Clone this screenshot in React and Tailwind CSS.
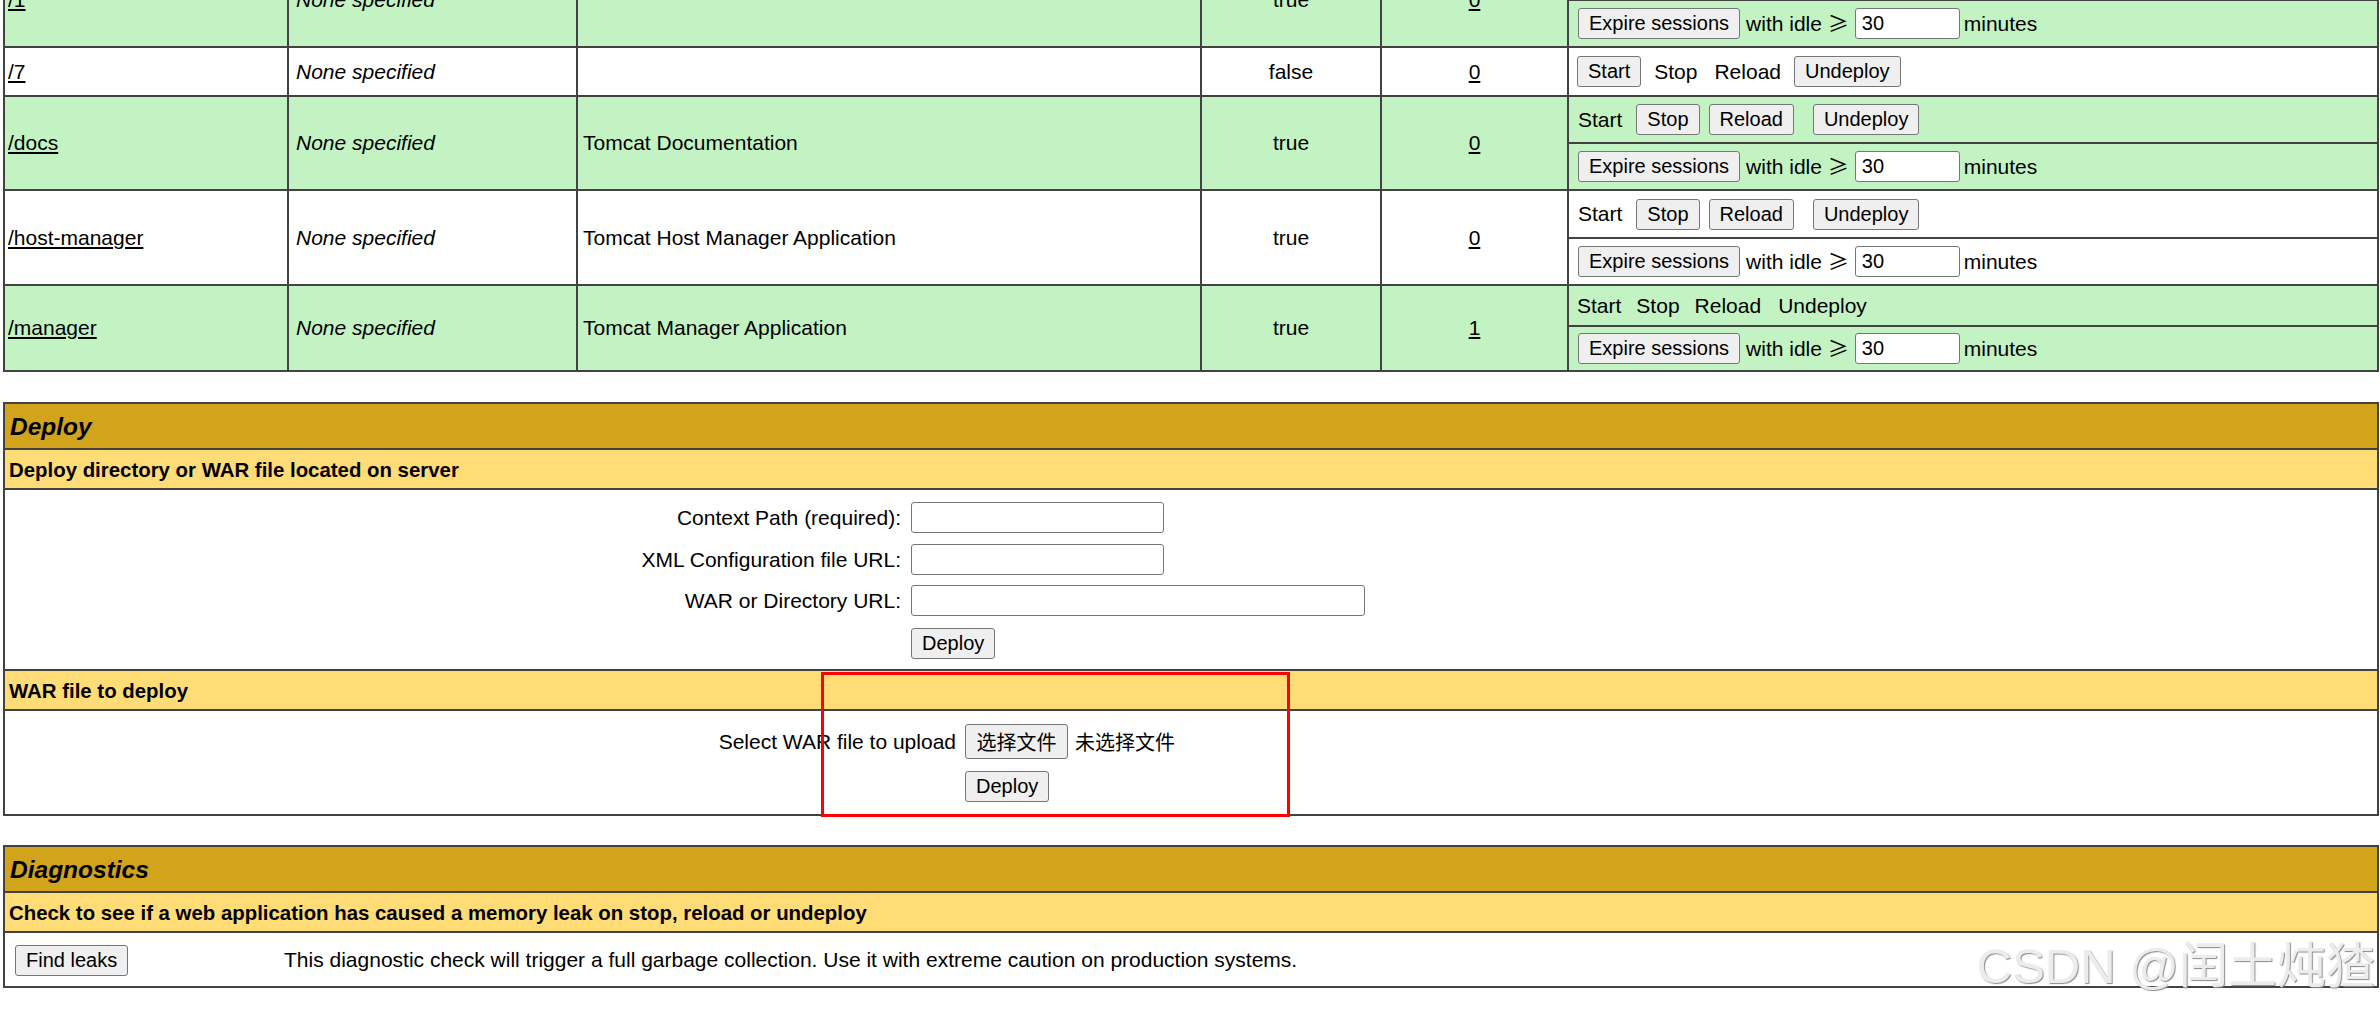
import React from 'react';

const line = 'border-[#424242]';

const Btn = ({ children, className = '' }) => (
  <button
    className={`h-[31px] px-[10px] border border-[#767676] rounded-[3px] bg-[#efefef] text-[20px] leading-[23px] text-black whitespace-nowrap ${className}`}
  >
    {children}
  </button>
);

// border-box heights: h includes the 2px divider on top
const ExpireRow = ({ h = 'h-[47px]' }) => (
  <div className={`flex items-center pl-[9px] border-t-2 ${line} ${h}`}>
    <Btn>Expire sessions</Btn>
    <span className="ml-[6px]">
      with idle <span className="font-['Noto_Sans_CJK_SC',sans-serif]">≥</span>
    </span>
    <input
      defaultValue="30"
      className="ml-[6px] w-[105px] h-[31px] border border-[#767676] rounded-[3px] bg-white pl-[6px] text-[20px] outline-none"
    />
    <span className="ml-[4px]">minutes</span>
  </div>
);

const RunningCmds = ({ h = 'h-[45px]' }) => (
  <div className={`flex items-center pl-[9px] ${h}`}>
    <span>Start</span>
    <Btn className="ml-[14px]">Stop</Btn>
    <Btn className="ml-[9px]">Reload</Btn>
    <Btn className="ml-[19px]">Undeploy</Btn>
  </div>
);

const AppRow = ({ path, name, running, sessions, green, children }) => (
  <div
    className={`grid grid-cols-[284px_289px_624px_180px_187px_1fr] border-b-2 ${line} ${
      green ? 'bg-[#C3F3C3]' : 'bg-white'
    }`}
  >
    <div className={`flex items-center pl-[3px] border-r-2 ${line}`}>
      <a className="underline text-black">{path}</a>
    </div>
    <div className={`flex items-center pl-[7px] border-r-2 ${line} italic`}>None specified</div>
    <div className={`flex items-center pl-[5px] border-r-2 ${line}`}>{name}</div>
    <div className={`flex items-center justify-center border-r-2 ${line}`}>{running}</div>
    <div className={`flex items-center justify-center border-r-2 ${line}`}>
      <a className="underline">{sessions}</a>
    </div>
    <div className="flex flex-col">{children}</div>
  </div>
);

const SectionTitle = ({ children }) => (
  <div className="h-[44px] bg-[#D2A41C] flex items-center pl-[5px] pt-[3px] text-[24.5px] font-bold italic">
    {children}
  </div>
);

const SubTitle = ({ children }) => (
  <div className={`h-[40px] bg-[#FFDC75] flex items-center pl-[4px] pt-[2px] text-[20.4px] font-bold border-t-2 ${line}`}>
    {children}
  </div>
);

export default function App() {
  return (
    <div className="relative w-[2380px] h-[1011px] overflow-hidden bg-white text-black text-[21px] font-['Liberation_Sans',Arial,sans-serif]">
      <div className="ml-[3px] mr-[1px]">
        {/* Applications table (scrolled) */}
        <div className={`-mt-[48px] border-2 border-b-0 ${line}`}>
          <AppRow path="/1" name="" running="true" sessions="0" green>
            <RunningCmds />
            <ExpireRow />
          </AppRow>
          <AppRow path="/7" name="" running="false" sessions="0">
            <div className="flex items-center pl-[8px] h-[47px]">
              <Btn>Start</Btn>
              <span className="ml-[13px]">Stop</span>
              <span className="ml-[17px]">Reload</span>
              <Btn className="ml-[13px]">Undeploy</Btn>
            </div>
          </AppRow>
          <AppRow path="/docs" name="Tomcat Documentation" running="true" sessions="0" green>
            <RunningCmds />
            <ExpireRow />
          </AppRow>
          <AppRow path="/host-manager" name="Tomcat Host Manager Application" running="true" sessions="0">
            <RunningCmds h="h-[46px]" />
            <ExpireRow />
          </AppRow>
          <AppRow path="/manager" name="Tomcat Manager Application" running="true" sessions="1" green>
            <div className="flex items-center pl-[8px] h-[39px]">
              <span>Start</span>
              <span className="ml-[15px]">Stop</span>
              <span className="ml-[15px]">Reload</span>
              <span className="ml-[17px]">Undeploy</span>
            </div>
            <ExpireRow h="h-[45px]" />
          </AppRow>
        </div>

        {/* Deploy */}
        <div className={`mt-[30px] border-2 ${line} flex flex-col`}>
          <SectionTitle>Deploy</SectionTitle>
          <SubTitle>Deploy directory or WAR file located on server</SubTitle>
          <div className={`h-[181px] border-t-2 ${line} pt-[12px]`}>
            <div className="grid grid-cols-[896px_auto] gap-x-[10px] gap-y-[10px] items-center">
              <div className="text-right">Context Path (required):</div>
              <input className="w-[253px] h-[31px] border border-[#767676] rounded-[3px] bg-white" />
              <div className="text-right">XML Configuration file URL:</div>
              <input className="w-[253px] h-[31px] border border-[#767676] rounded-[3px] bg-white" />
              <div className="text-right">WAR or Directory URL:</div>
              <input className="w-[454px] h-[31px] border border-[#767676] rounded-[3px] bg-white" />
              <div />
              <div>
                <Btn>Deploy</Btn>
              </div>
            </div>
          </div>
          <SubTitle>WAR file to deploy</SubTitle>
          <div className={`h-[105px] border-t-2 ${line} pt-[13px]`}>
            <div className="grid grid-cols-[951px_auto] gap-x-[9px] gap-y-[11px] items-center">
              <div className="text-right">Select WAR file to upload</div>
              <div className="flex items-center">
                <button className="h-[35px] w-[103px] border border-[#767676] rounded-[3px] bg-[#efefef] text-[20px] font-['Noto_Sans_CJK_SC',sans-serif]">
                  选择文件
                </button>
                <span className="ml-[7px] text-[20px] font-['Noto_Sans_CJK_SC',sans-serif]">未选择文件</span>
              </div>
              <div />
              <div>
                <Btn>Deploy</Btn>
              </div>
            </div>
          </div>
        </div>

        {/* Diagnostics */}
        <div className={`mt-[29px] border-2 ${line} flex flex-col`}>
          <SectionTitle>Diagnostics</SectionTitle>
          <SubTitle>Check to see if a web application has caused a memory leak on stop, reload or undeploy</SubTitle>
          <div className={`h-[55px] border-t-2 ${line} grid grid-cols-[275px_1fr] items-center`}>
            <div className="pl-[10px]">
              <Btn>Find leaks</Btn>
            </div>
            <div className="pl-[4px] pt-[1px]">
              This diagnostic check will trigger a full garbage collection. Use it with extreme caution on production systems.
            </div>
          </div>
        </div>
      </div>

      {/* annotation box */}
      <div className="absolute left-[821px] top-[672px] w-[469px] h-[145px] border-[3px] border-[#ff0000] pointer-events-none" />

      {/* watermark */}
      <div className="absolute right-[5px] top-[936px] text-[49px] leading-[60px] text-[#ececec] [text-shadow:1px_1px_1px_#8a8a8a] font-['Liberation_Sans','Noto_Sans_CJK_SC',sans-serif] pointer-events-none">
        CSDN @闰土炖猹
      </div>
    </div>
  );
}
